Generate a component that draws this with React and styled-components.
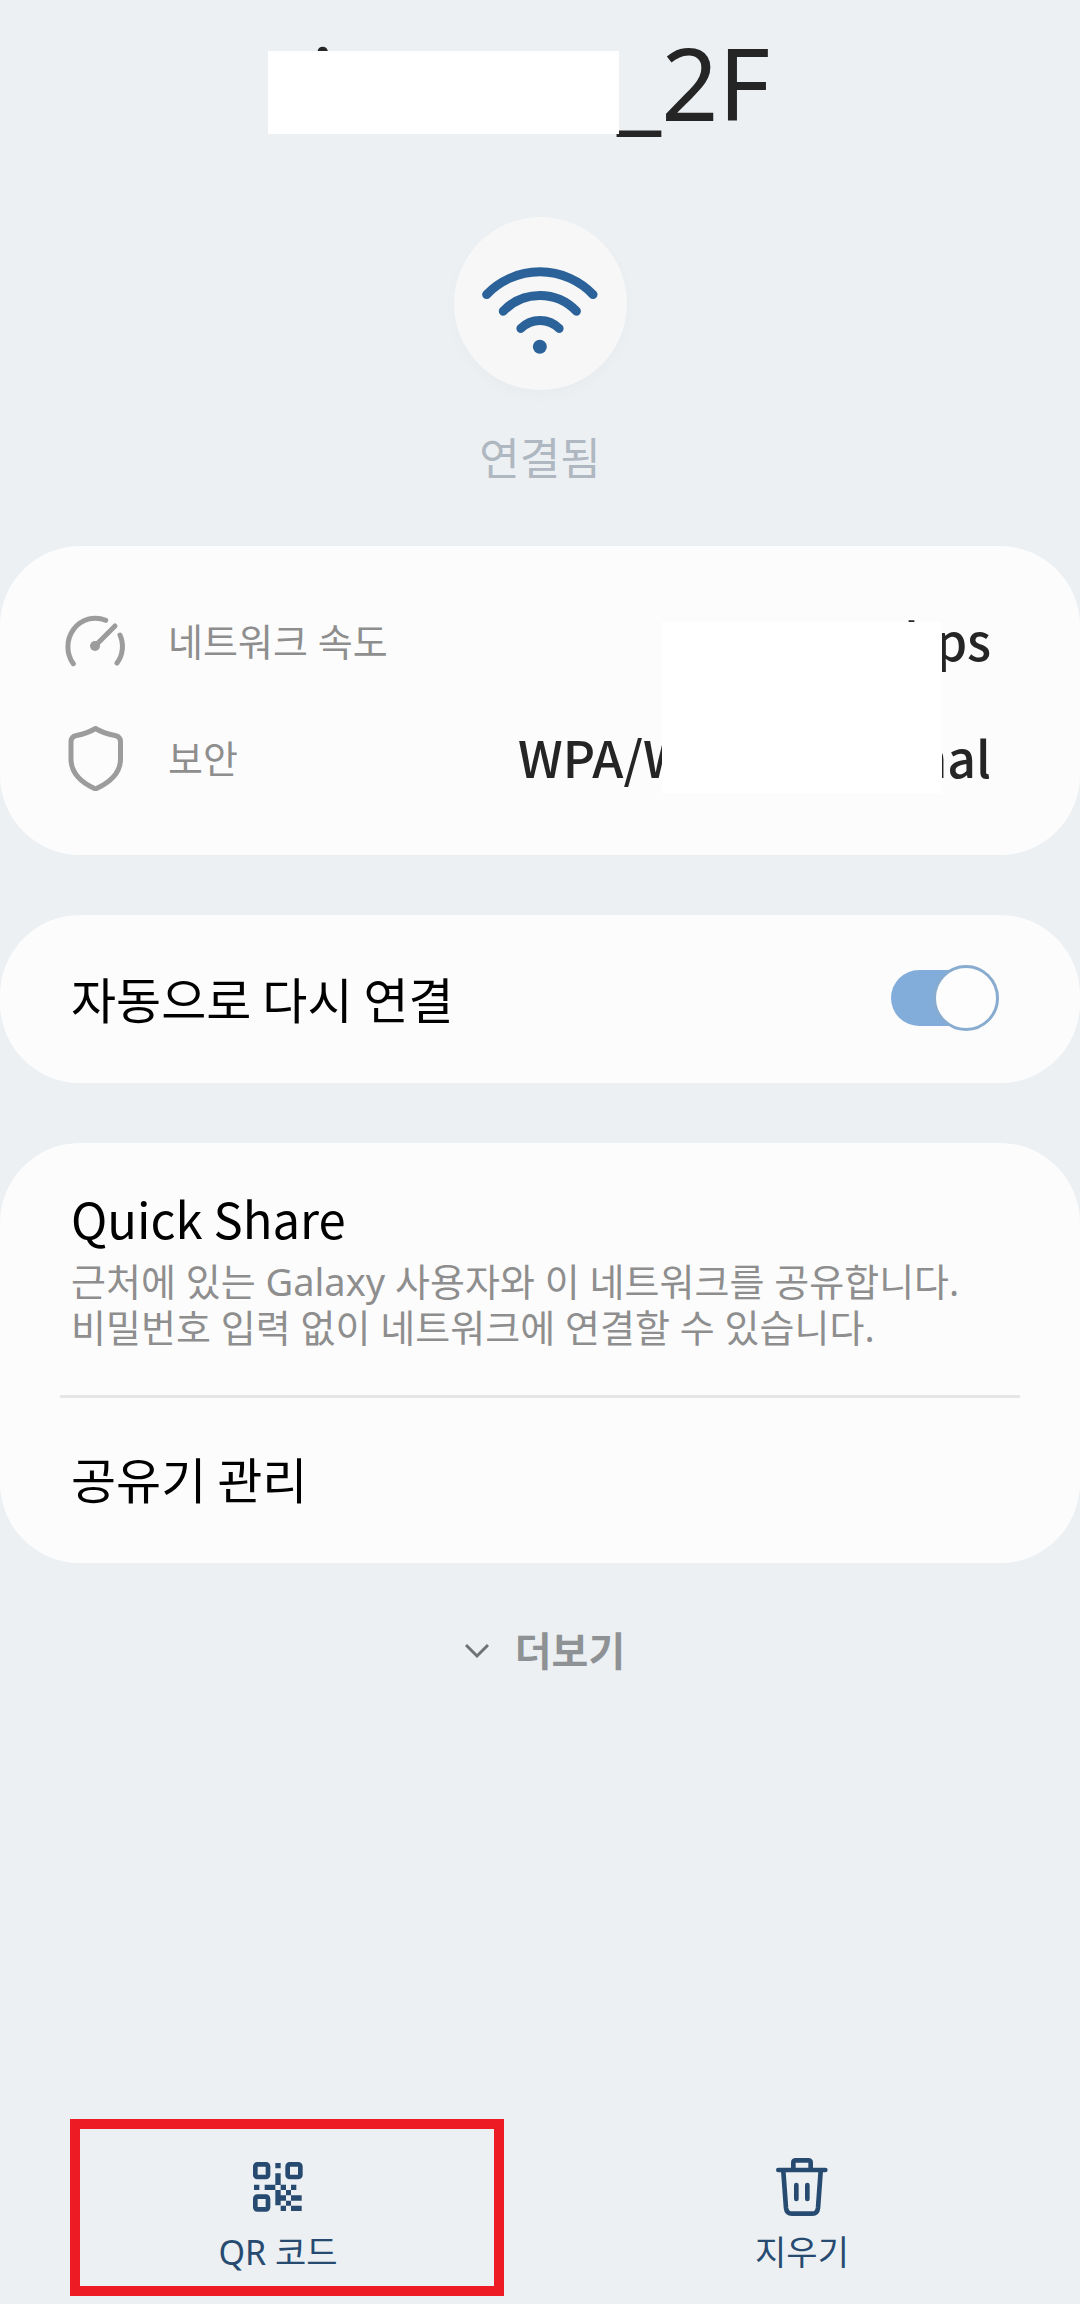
import React, { useState } from "react";
import styled, { createGlobalStyle } from "styled-components";

function WifiIcon() {
  return (
    <svg viewBox="100 50 520 520" width="173" height="173" fill="none" stroke="#2b6299" strokeWidth="27" strokeLinecap="round">
      <path d="M198 283A222 222 0 0 1 518 283" />
      <path d="M248 333A152 152 0 0 1 468 333" />
      <path d="M301 385A81 81 0 0 1 416 385" />
      <circle cx="358" cy="440" r="21" fill="#2b6299" stroke="none" />
    </svg>
  );
}

function SpeedIcon() {
  return (
    <svg viewBox="0 0 66 66" width="66" height="66" fill="none" stroke="#9c9c9c" strokeWidth="5" strokeLinecap="round">
      <path d="M11.3 55.7A27.5 28.5 0 0 1 43.7 12.3" />
      <path d="M58 27A28 28 0 0 1 55 55" />
      <path d="M53 18L33 38" />
      <circle cx="33" cy="38" r="5" fill="#9c9c9c" stroke="none" />
    </svg>
  );
}

function ShieldIcon() {
  return (
    <svg viewBox="0 0 66 66" width="66" height="66" fill="none" stroke="#9c9c9c" strokeWidth="5" strokeLinejoin="round">
      <path d="M33.5 3.5C27 7.5 22 9 14.5 10.5Q9 11.5 9 17V34C9 48 18 57 33.5 64C49 57 58.5 48 58.5 34V17Q58.5 11.5 53 10.5C45 9 40 7.5 33.5 3.5Z" />
    </svg>
  );
}

function ChevronIcon() {
  return (
    <svg viewBox="0 0 24 16" width="24" height="16" fill="none" stroke="#6f7275" strokeWidth="3">
      <path d="M1 2L12 13L23 2" />
    </svg>
  );
}

function QrIcon() {
  return (
    <svg viewBox="66 66 150 150" width="50" height="50" fill="#274b70">
      <g fill="none" stroke="#274b70" strokeWidth="14">
        <rect x="73" y="73" width="38" height="38" rx="6" />
        <rect x="170" y="73" width="38" height="38" rx="6" />
        <rect x="73" y="170" width="38" height="38" rx="6" />
      </g>
      <path d="M133 69h16v16h-16zM133 100h16v35h-16zM69 134h16v16h-16zM101 134h32v16h-32zM149 134h16v16h-16zM180 134h16v16h-16z" />
      <path d="M165 150h15v16h-15zM133 150h16v46h-16zM149 166h16v16h-16zM180 166h32v16h-32zM165 182h15v15h-15zM149 197h16v16h-16zM180 197h32v16h-32z" />
    </svg>
  );
}

function TrashIcon() {
  return (
    <svg viewBox="138 84 156 174" width="52" height="58" fill="none" stroke="#274b70" strokeWidth="14" strokeLinecap="round">
      <path d="M145 120H286" />
      <path d="M190 118V98Q190 91 197 91H235Q242 91 242 98V118" />
      <path d="M160 124L168 234Q170 251 186 251H247Q262 251 264 234L272 124" />
      <path d="M199 165V207M232 165V207" />
    </svg>
  );
}

function App() {
  const [autoReconnect, setAutoReconnect] = useState(true);

  return (
    <Page>
      <GlobalStyle />
      <NetworkName>
        <HiddenName>i</HiddenName>_2F
      </NetworkName>
      <WifiBadge>
        <WifiIcon />
      </WifiBadge>
      <Status>연결됨</Status>

      <Sections>
        <InfoCard>
          <InfoRow>
            <SpeedIcon />
            <InfoLabel>네트워크 속도</InfoLabel>
            <InfoValue>bps</InfoValue>
          </InfoRow>
          <InfoRow>
            <ShieldIcon />
            <InfoLabel>보안</InfoLabel>
            <InfoValue $wide>
              <span>WPA/W</span>
              <span>nal</span>
            </InfoValue>
          </InfoRow>
          <Cover />
        </InfoCard>

        <Card>
          <ToggleRow>
            <ItemTitle as="span">자동으로 다시 연결</ItemTitle>
            <Toggle
              type="checkbox"
              role="switch"
              checked={autoReconnect}
              onChange={(e) => setAutoReconnect(e.target.checked)}
            />
          </ToggleRow>
        </Card>

        <Card>
          <ShareItem>
            <ItemTitle>Quick Share</ItemTitle>
            <Description>
              근처에 있는 Galaxy 사용자와 이 네트워크를 공유합니다.
              <br />
              비밀번호 입력 없이 네트워크에 연결할 수 있습니다.
            </Description>
          </ShareItem>
          <Divider />
          <RouterItem>
            <ItemTitle>공유기 관리</ItemTitle>
          </RouterItem>
        </Card>
      </Sections>

      <MoreButton>
        <ChevronIcon />
        더보기
      </MoreButton>

      <BottomBar>
        <BarButton $marked>
          <BarIcon>
            <QrIcon />
          </BarIcon>
          QR 코드
        </BarButton>
        <BarButton>
          <BarIcon>
            <TrashIcon />
          </BarIcon>
          지우기
        </BarButton>
      </BottomBar>
    </Page>
  );
}

export default App;

const GlobalStyle = createGlobalStyle`
  *, *::before, *::after {
    box-sizing: border-box;
  }

  body {
    margin: 0;
    background: #ecf0f3;
    font-family: "Noto Sans", "Noto Sans CJK KR", sans-serif;
  }

  h1, h2, p {
    margin: 0;
    font-weight: 400;
  }

  button {
    border: 0;
    padding: 0;
    background: none;
    font-family: inherit;
  }

  svg {
    display: block;
    flex-shrink: 0;
  }
`;

const Page = styled.main`
  display: flex;
  flex-direction: column;
  align-items: center;
  min-height: 100vh;
`;

const NetworkName = styled.h1`
  display: flex;
  padding-top: 20px;
  color: #252525;
  font-size: 100px;
  line-height: 124px;
`;

const HiddenName = styled.span`
  position: relative;
  width: 307px;

  &::after {
    content: "";
    position: absolute;
    top: 31px;
    right: -2px;
    width: 351px;
    height: 83px;
    background: #fff;
  }
`;

const WifiBadge = styled.div`
  margin-top: 73px;
  border-radius: 50%;
  background: #f7f7f7;
  box-shadow: 0 6px 16px rgba(0, 0, 0, 0.02);
`;

const Status = styled.p`
  margin-top: 36px;
  color: #afb7c1;
  font-size: 44px;
  line-height: 64px;
`;

const Sections = styled.div`
  display: flex;
  flex-direction: column;
  gap: 60px;
  width: 100%;
  margin-top: 56px;
`;

const Card = styled.section`
  position: relative;
  border-radius: 80px;
  background: #fcfcfc;
`;

const InfoCard = styled(Card)`
  display: flex;
  flex-direction: column;
  gap: 51px;
  padding: 62px 89px 64px 62px;
`;

const InfoRow = styled.div`
  display: flex;
  align-items: center;
  height: 66px;
`;

const InfoLabel = styled.span`
  margin-left: 40px;
  color: #8e8e8e;
  font-size: 38px;
  line-height: 62px;
`;

const InfoValue = styled.span`
  display: flex;
  justify-content: space-between;
  width: ${({ $wide }) => ($wide ? "473px" : "auto")};
  margin-left: auto;
  padding-bottom: 4px;
  color: #252525;
  font-family: "Noto Sans CJK KR", sans-serif;
  font-size: 50px;
  font-weight: 500;
  line-height: 60px;
`;

const Cover = styled.div`
  position: absolute;
  top: 76px;
  right: 138px;
  width: 280px;
  height: 171px;
  background: #fff;
`;

const ToggleRow = styled.label`
  display: flex;
  align-items: center;
  justify-content: space-between;
  padding: 50px 81px 52px 71px;
`;

const ItemTitle = styled.h2`
  color: #000;
  font-family: "Noto Sans CJK KR", sans-serif;
  font-size: 49px;
  line-height: 60px;
`;

const Toggle = styled.input`
  appearance: none;
  position: relative;
  width: 108px;
  height: 66px;
  margin: 0;

  &::before {
    content: "";
    position: absolute;
    inset: 5px 10px 5px 0;
    border-radius: 28px;
    background: ${({ checked }) => (checked ? "#82addb" : "#c4c8cc")};
  }

  &::after {
    content: "";
    position: absolute;
    top: 0;
    ${({ checked }) => (checked ? "right: 0;" : "left: 0;")}
    width: 66px;
    height: 66px;
    border: 3px solid #88abd0;
    border-radius: 50%;
    background: #fdfdfd;
  }
`;

const ShareItem = styled.div`
  padding: 45px 71px;
`;

const Description = styled.p`
  margin-top: 10px;
  color: #8e8e8e;
  font-size: 38px;
  line-height: 46px;
`;

const Divider = styled.hr`
  height: 3px;
  margin: 0 60px;
  border: 0;
  background: #e6e6e6;
`;

const RouterItem = styled.div`
  padding: 50px 71px 55px;
`;

const MoreButton = styled.button`
  display: flex;
  align-items: center;
  gap: 26px;
  margin-top: 58px;
  padding-left: 10px;
  color: #8f9294;
  font-size: 40px;
  font-weight: 700;
  line-height: 60px;
`;

const BottomBar = styled.nav`
  display: grid;
  grid-template-columns: 1fr 1fr;
  width: 100%;
  margin-top: auto;
  padding: 0 16px 8px;
`;

const BarButton = styled.button`
  position: relative;
  display: flex;
  flex-direction: column;
  align-items: center;
  gap: 12px;
  padding: 39px 0 20px;
  color: #274b70;
  font-size: 34px;
  line-height: 48px;

  &::after {
    content: "";
    display: ${({ $marked }) => ($marked ? "block" : "none")};
    position: absolute;
    inset: 0 36px 0 54px;
    border: 10px solid #ed1c24;
  }
`;

const BarIcon = styled.span`
  display: flex;
  align-items: center;
  height: 58px;
`;
